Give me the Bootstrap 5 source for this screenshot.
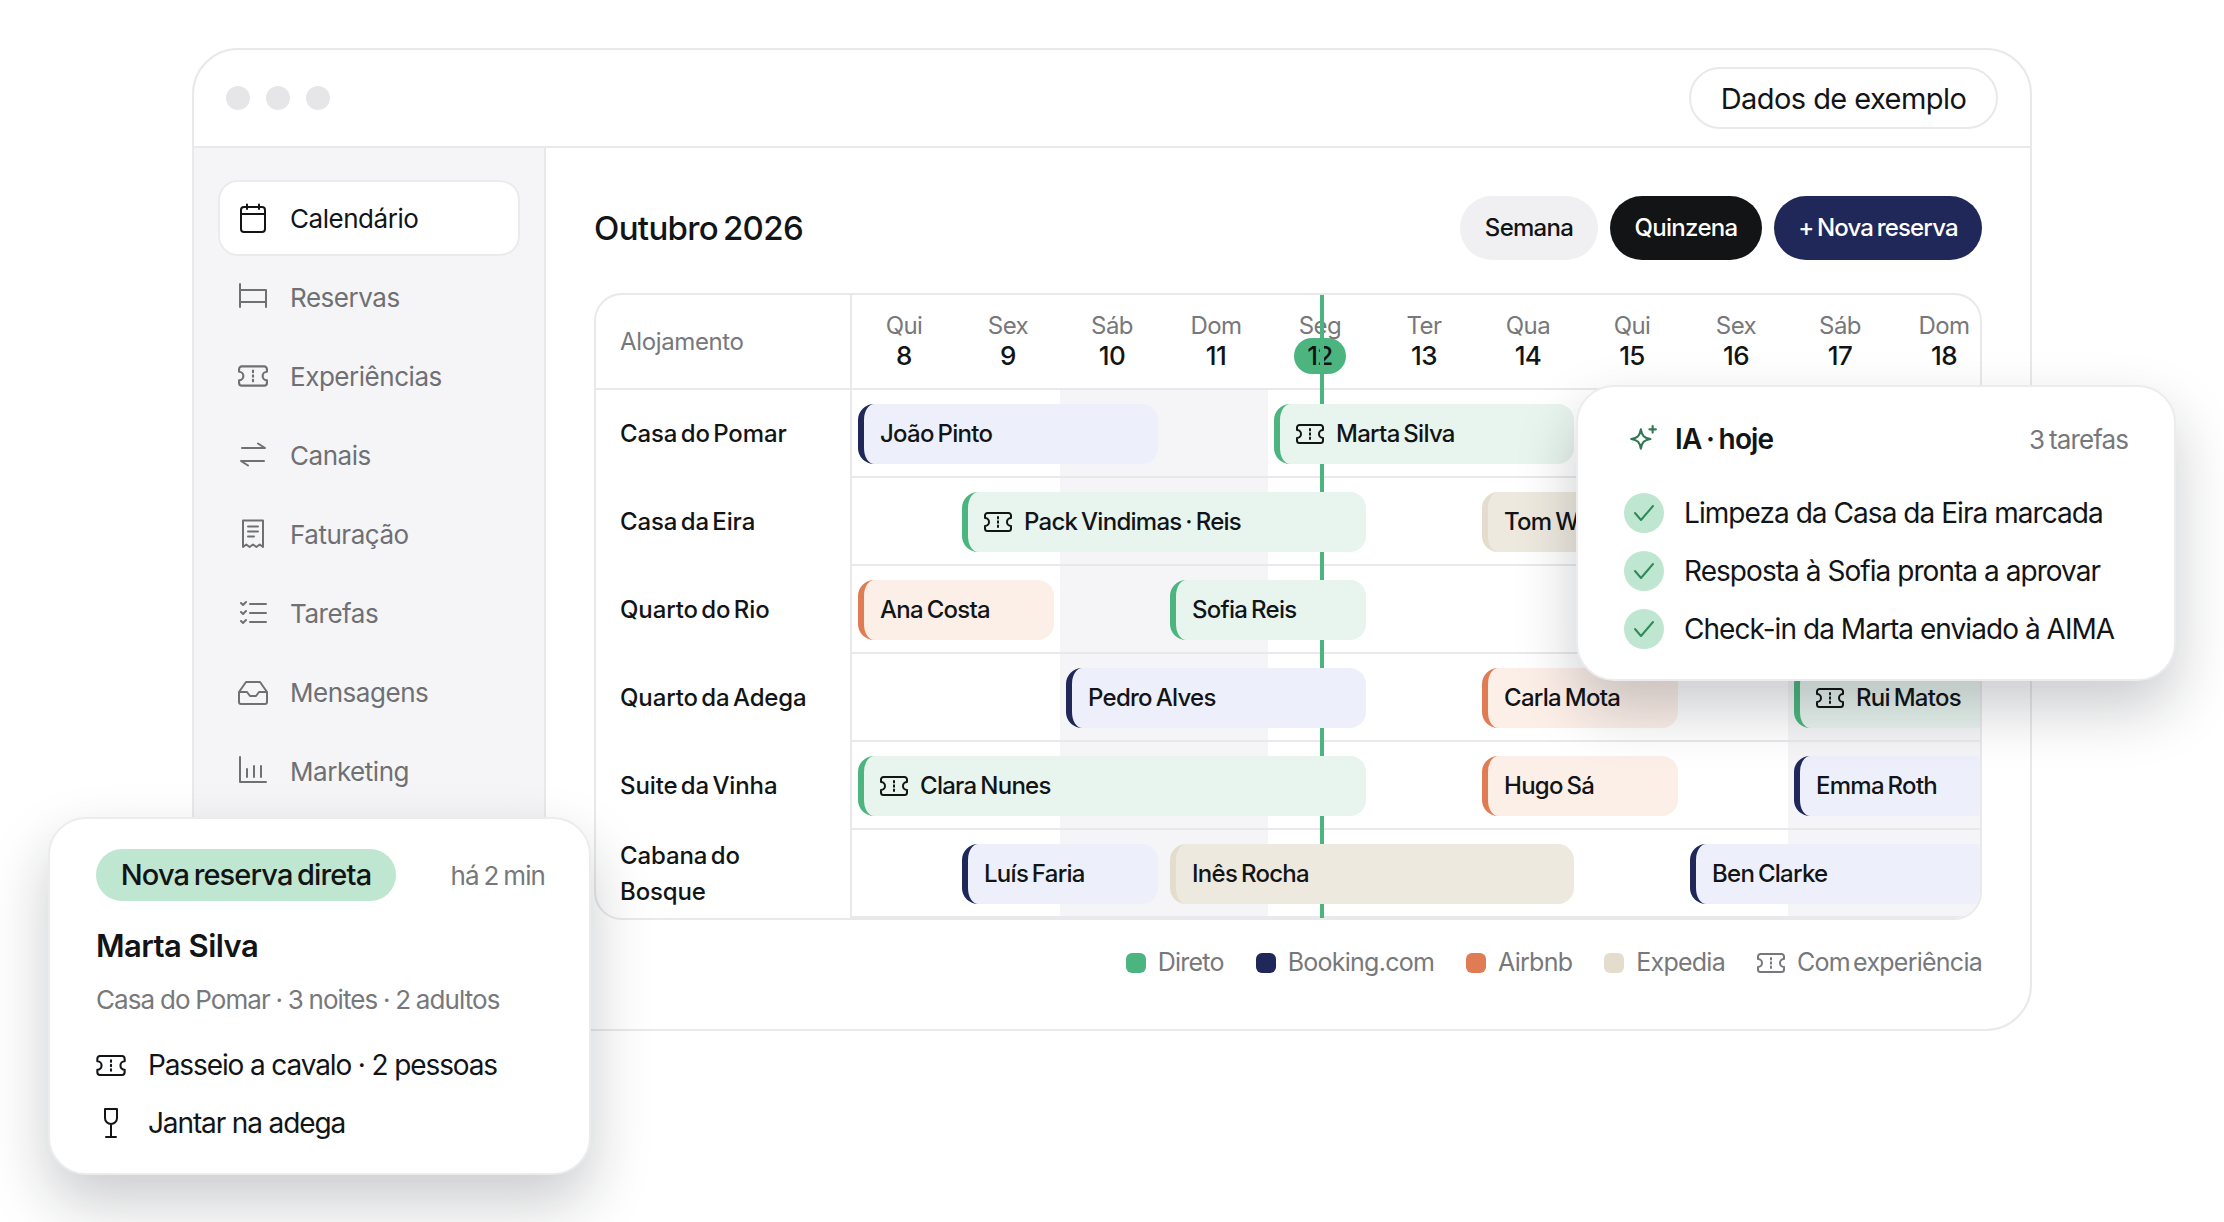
<!DOCTYPE html>
<html lang="pt-PT">
<head>
    <meta charset="UTF-8">
    <meta name="viewport" content="width=device-width, initial-scale=1.0">
    <title>Calendário de reservas</title>
    <link href="https://cdn.jsdelivr.net/npm/bootstrap@5.3.0/dist/css/bootstrap.min.css" rel="stylesheet">
    <style>
        body { background: #fff; color: #121416; font-family: "Inter", "Liberation Sans", sans-serif; letter-spacing: -.035em; }
        svg { display: block; flex-shrink: 0; fill: none; stroke: currentColor; stroke-width: 2; stroke-linecap: round; stroke-linejoin: round; }

        .stage { position: relative; width: 2224px; height: 1222px; padding: 48px 0 0 192px; overflow: hidden; }
        .app-window { width: 1840px; height: 983px; border: 2px solid #e9e9eb; border-radius: 46px; overflow: hidden; }

        .title-bar { height: 98px; padding: 0 32px 0 32px; border-bottom: 2px solid #e9e9eb; }
        .dot-grey { width: 24px; height: 24px; border-radius: 50%; background: #e6e6e8; }
        .sample-tag { height: 62px; width: 309px; padding-top: 2px; border: 2px solid #e9e9eb; border-radius: 31px; font-size: 29px; }

        .side-nav { width: 352px; flex-shrink: 0; padding: 32px 24px 0 24px; background: #f5f5f7; border-right: 2px solid #e9e9eb; }
        .side-item { height: 76px; padding-left: 18px; margin-bottom: 3px; gap: 22px; color: #6f7073; font-size: 26px; letter-spacing: -.018em; border: 2px solid transparent; border-radius: 20px; }
        .side-item.is-active { background: #fff; border-color: #ebebed; color: #121416; }

        .main-pane { padding: 48px 0 0 48px; width: 1436px; }
        .month-title { font-size: 33px; font-weight: 500; margin: 2px 0 0; letter-spacing: -.02em; word-spacing: -.1em; }
        .pill-btn { height: 64px; border-radius: 32px; font-size: 24px; font-weight: 500; letter-spacing: -.03em; }
        .pill-week { width: 138px; background: #f0f0f2; }
        .pill-fort { width: 152px; background: #121416; color: #fff; }
        .pill-new { width: 208px; background: #1f2859; color: #fff; letter-spacing: -.035em; word-spacing: -.08em; }

        .cal-box { position: relative; width: 1388px; margin-top: 33px; border: 2px solid #e9e9eb; border-radius: 28px; overflow: hidden; }
        .cal-head { height: 95px; border-bottom: 2px solid #e9e9eb; }
        .cal-name { width: 256px; flex-shrink: 0; padding: 0 0 0 24px; border-right: 2px solid #e9e9eb; font-size: 24px; font-weight: 500; line-height: 36px; letter-spacing: -.005em; word-spacing: -.12em; }
        .cal-name.is-muted { color: #77787b; font-weight: 400; letter-spacing: -.015em; }
        .day-grid, .cal-track { display: grid; grid-template-columns: repeat(11, 104px); width: 1144px; flex-shrink: 0; }
        .day-cell { text-align: center; padding-top: 16px; font-size: 24px; line-height: 29px; color: #77787b; font-weight: 400; }
        .day-cell b { display: block; margin: -2px auto 0; width: 52px; height: 36px; line-height: 36px; color: #121416; font-size: 26px; font-weight: 500; border-radius: 18px; }
        .day-cell b.is-today { background: #4cb57f; }
        .cal-track { height: 88px; padding-top: 14px; border-bottom: 2px solid #e9e9eb;
            background: linear-gradient(90deg, transparent 208px, #f5f5f7 208px, #f5f5f7 416px, transparent 416px, transparent 936px, #f5f5f7 936px); }
        .today-line { position: absolute; left: 724px; top: 0; bottom: 0; width: 4px; background: #4cb57f; z-index: 1; }
        .stay { position: relative; z-index: 2; height: 60px; margin: 0 6px; padding-left: 16px; gap: 12px; border-left: 6px solid; border-radius: 16px; font-size: 24px; font-weight: 500; letter-spacing: -.03em; word-spacing: -.08em; white-space: nowrap; overflow: hidden; }
        .stay-direct { background: #e8f4ee; border-color: #4cb57f; }
        .stay-booking { background: #edf0fb; border-color: #1f2859; }
        .stay-airbnb { background: #fcefe8; border-color: #e07c54; }
        .stay-expedia { background: #eee9de; border-color: #e4ddcd; }

        .legend-bar { margin-top: 24px; width: 1388px; gap: 32px; color: #77787b; font-size: 25px; letter-spacing: -.03em; word-spacing: -.12em; }
        .legend-bar > span { gap: 12px; }
        .legend-dot { width: 20px; height: 20px; border-radius: 6px; }

        .float-card { position: absolute; z-index: 5; background: #fff; border: 2px solid #ececee; border-radius: 38px; box-shadow: 0 28px 60px rgba(20, 24, 30, .22); }
        .new-card { left: 48px; top: 817px; width: 543px; height: 358px; padding: 30px 44px 0 46px; }
        .new-tag { height: 52px; width: 300px; border-radius: 26px; background: #bfe6d0; font-size: 29px; font-weight: 500; letter-spacing: -.03em; word-spacing: -.08em; }
        .muted-note { color: #77787b; font-size: 26px; letter-spacing: -.035em; word-spacing: -.06em; }
        .guest-name { font-size: 31px; font-weight: 600; margin: 24px 0 0; line-height: 42px; }
        .guest-sub { color: #77787b; font-size: 26px; margin-top: 15px; line-height: 36px; letter-spacing: -.035em; word-spacing: -.03em; }
        .extra-list { margin-top: 18px; }
        .extra-row { height: 58px; gap: 22px; font-size: 28px; letter-spacing: -.04em; }
        .ia-card { left: 1576px; top: 385px; width: 600px; height: 296px; padding: 31px 46px 0 46px; }
        .ia-title { gap: 17px; font-size: 28px; font-weight: 600; letter-spacing: -.03em; word-spacing: -.06em; }
        .ia-item { height: 58px; gap: 20px; font-size: 28px; letter-spacing: -.034em; white-space: nowrap; }
        .check-dot { width: 40px; height: 40px; border-radius: 50%; background: #bfe6d0; color: #2f8a5a; }
    </style>
</head>
<body>
<svg width="0" height="0" class="position-absolute">
    <symbol id="ticket" viewBox="0 0 28 20">
        <path d="M3.500 1h21A2.500 2.500 0 0 1 27 3.500V6a4 4 0 0 0 0 8v2.500a2.500 2.500 0 0 1-2.500 2.500h-21A2.500 2.500 0 0 1 1 16.500V14a4 4 0 0 0 0-8V3.500A2.500 2.500 0 0 1 3.500 1z"/>
        <path d="M14 5v1.500M14 9.300v1.400M14 13.500V15"/>
    </symbol>
</svg>

<div class="stage">
    <div class="app-window d-flex flex-column">
        <div class="title-bar d-flex align-items-center justify-content-between">
            <div class="d-flex gap-3">
                <span class="dot-grey"></span>
                <span class="dot-grey"></span>
                <span class="dot-grey"></span>
            </div>
            <div class="sample-tag d-flex align-items-center justify-content-center">Dados de exemplo</div>
        </div>

        <div class="d-flex flex-grow-1">
            <nav class="side-nav">
                <div class="side-item is-active d-flex align-items-center">
                    <svg width="30" height="30" viewBox="0 0 30 30"><rect x="3" y="4" width="24" height="25" rx="3"/><path d="M3 11h24M9 1.500V6M21 1.500V6"/></svg>
                    Calendário
                </div>
                <div class="side-item d-flex align-items-center">
                    <svg width="30" height="30" viewBox="0 0 30 30"><path d="M2 2v23M2 8h26v17M2 20h26"/></svg>
                    Reservas
                </div>
                <div class="side-item d-flex align-items-center">
                    <svg width="30" height="22"><use href="#ticket"/></svg>
                    Experiências
                </div>
                <div class="side-item d-flex align-items-center">
                    <svg width="30" height="30" viewBox="0 0 30 30"><path d="M4 8h23l-7-4.500M26 21H3l7 4.500"/></svg>
                    Canais
                </div>
                <div class="side-item d-flex align-items-center">
                    <svg width="30" height="30" viewBox="0 0 30 30"><path d="M5 1.500h20V28l-3.300-2.500-3.300 2.500-3.400-2.500-3.400 2.500-3.300-2.500L5 28zM10 7.500h10M10 12.500h10M10 17.500h6"/></svg>
                    Faturação
                </div>
                <div class="side-item d-flex align-items-center">
                    <svg width="30" height="30" viewBox="0 0 30 30"><path d="M12 6h16M12 15h16M12 24h16M3 5l2 2 3-3M3 14l2 2 3-3M3 23l2 2 3-3"/></svg>
                    Tarefas
                </div>
                <div class="side-item d-flex align-items-center">
                    <svg width="30" height="30" viewBox="0 0 30 30"><path d="M8 5h14l7 10v10a2 2 0 0 1-2 2H3a2 2 0 0 1-2-2V15zM1 15h8l3 4h6l3-4h8"/></svg>
                    Mensagens
                </div>
                <div class="side-item d-flex align-items-center">
                    <svg width="30" height="30" viewBox="0 0 30 30"><path d="M2 1v25h26M9 13v8M16 10v11M23 10v11"/></svg>
                    Marketing
                </div>
            </nav>

            <main class="main-pane">
                <div class="d-flex align-items-center justify-content-between" style="width: 1388px">
                    <h1 class="month-title">Outubro 2026</h1>
                    <div class="d-flex gap-2">
                        <div class="pill-btn pill-week d-flex align-items-center justify-content-center">Semana</div>
                        <div class="pill-btn pill-fort d-flex align-items-center justify-content-center ms-1">Quinzena</div>
                        <div class="pill-btn pill-new d-flex align-items-center justify-content-center ms-1">+ Nova reserva</div>
                    </div>
                </div>

                <div class="cal-box">
                    <div class="cal-head d-flex">
                        <div class="cal-name is-muted d-flex align-items-center">Alojamento</div>
                        <div class="day-grid">
                            <div class="day-cell">Qui<b>8</b></div>
                            <div class="day-cell">Sex<b>9</b></div>
                            <div class="day-cell">Sáb<b>10</b></div>
                            <div class="day-cell">Dom<b>11</b></div>
                            <div class="day-cell">Seg<b class="is-today">12</b></div>
                            <div class="day-cell">Ter<b>13</b></div>
                            <div class="day-cell">Qua<b>14</b></div>
                            <div class="day-cell">Qui<b>15</b></div>
                            <div class="day-cell">Sex<b>16</b></div>
                            <div class="day-cell">Sáb<b>17</b></div>
                            <div class="day-cell">Dom<b>18</b></div>
                        </div>
                    </div>

                    <div class="d-flex">
                        <div class="cal-name d-flex align-items-center">Casa do Pomar</div>
                        <div class="cal-track">
                            <div class="stay stay-booking d-flex align-items-center" style="grid-column: 1 / span 3">João Pinto</div>
                            <div class="stay stay-direct d-flex align-items-center" style="grid-column: 5 / span 3"><svg width="28" height="20"><use href="#ticket"/></svg>Marta Silva</div>
                        </div>
                    </div>
                    <div class="d-flex">
                        <div class="cal-name d-flex align-items-center">Casa da Eira</div>
                        <div class="cal-track">
                            <div class="stay stay-direct d-flex align-items-center" style="grid-column: 2 / span 4"><svg width="28" height="20"><use href="#ticket"/></svg>Pack Vindimas · Reis</div>
                            <div class="stay stay-expedia d-flex align-items-center" style="grid-column: 7 / span 3">Tom Walker</div>
                        </div>
                    </div>
                    <div class="d-flex">
                        <div class="cal-name d-flex align-items-center">Quarto do Rio</div>
                        <div class="cal-track">
                            <div class="stay stay-airbnb d-flex align-items-center" style="grid-column: 1 / span 2">Ana Costa</div>
                            <div class="stay stay-direct d-flex align-items-center" style="grid-column: 4 / span 2">Sofia Reis</div>
                        </div>
                    </div>
                    <div class="d-flex">
                        <div class="cal-name d-flex align-items-center">Quarto da Adega</div>
                        <div class="cal-track">
                            <div class="stay stay-booking d-flex align-items-center" style="grid-column: 3 / span 3">Pedro Alves</div>
                            <div class="stay stay-airbnb d-flex align-items-center" style="grid-column: 7 / span 2">Carla Mota</div>
                            <div class="stay stay-direct d-flex align-items-center" style="grid-column: 10 / span 2"><svg width="28" height="20"><use href="#ticket"/></svg>Rui Matos</div>
                        </div>
                    </div>
                    <div class="d-flex">
                        <div class="cal-name d-flex align-items-center">Suite da Vinha</div>
                        <div class="cal-track">
                            <div class="stay stay-direct d-flex align-items-center" style="grid-column: 1 / span 5"><svg width="28" height="20"><use href="#ticket"/></svg>Clara Nunes</div>
                            <div class="stay stay-airbnb d-flex align-items-center" style="grid-column: 7 / span 2">Hugo Sá</div>
                            <div class="stay stay-booking d-flex align-items-center" style="grid-column: 10 / span 2">Emma Roth</div>
                        </div>
                    </div>
                    <div class="d-flex">
                        <div class="cal-name d-flex align-items-center"><span>Cabana do<br>Bosque</span></div>
                        <div class="cal-track">
                            <div class="stay stay-booking d-flex align-items-center" style="grid-column: 2 / span 2">Luís Faria</div>
                            <div class="stay stay-expedia d-flex align-items-center" style="grid-column: 4 / span 4">Inês Rocha</div>
                            <div class="stay stay-booking d-flex align-items-center" style="grid-column: 9 / span 3">Ben Clarke</div>
                        </div>
                    </div>
                    <div class="today-line"></div>
                </div>

                <div class="legend-bar d-flex justify-content-end">
                    <span class="d-flex align-items-center"><i class="legend-dot" style="background: #4cb57f"></i>Direto</span>
                    <span class="d-flex align-items-center"><i class="legend-dot" style="background: #1f2859"></i>Booking.com</span>
                    <span class="d-flex align-items-center"><i class="legend-dot" style="background: #e07c54"></i>Airbnb</span>
                    <span class="d-flex align-items-center"><i class="legend-dot" style="background: #e4ddcd"></i>Expedia</span>
                    <span class="d-flex align-items-center"><svg width="28" height="20"><use href="#ticket"/></svg>Com experiência</span>
                </div>
            </main>
        </div>
    </div>

    <div class="float-card new-card">
        <div class="d-flex align-items-center justify-content-between">
            <div class="new-tag d-flex align-items-center justify-content-center">Nova reserva direta</div>
            <span class="muted-note">há 2 min</span>
        </div>
        <div class="guest-name">Marta Silva</div>
        <div class="guest-sub">Casa do Pomar · 3 noites · 2 adultos</div>
        <div class="extra-list">
            <div class="extra-row d-flex align-items-center">
                <svg width="30" height="21"><use href="#ticket"/></svg>
                Passeio a cavalo · 2 pessoas
            </div>
            <div class="extra-row d-flex align-items-center">
                <svg width="30" height="32" viewBox="0 0 30 32"><path d="M9 2h12v9a6 6 0 0 1-12 0zM15 17v13M10 30h10"/></svg>
                Jantar na adega
            </div>
        </div>
    </div>

    <div class="float-card ia-card">
        <div class="d-flex align-items-center justify-content-between mb-4">
            <div class="ia-title d-flex align-items-center ps-1">
                <svg width="30" height="28" viewBox="0 0 28 26" style="color: #2f7a55"><path d="M12 4c1 6 3 8 9 9-6 1-8 3-9 9-1-6-3-8-9-9 6-1 8-3 9-9zM23 1v6M20 4h6"/></svg>
                IA · hoje
            </div>
            <span class="muted-note">3 tarefas</span>
        </div>
        <div class="ia-item d-flex align-items-center">
            <span class="check-dot d-flex align-items-center justify-content-center"><svg width="22" height="18" viewBox="0 0 22 18"><path d="M2 9l6 7L20 2"/></svg></span>
            Limpeza da Casa da Eira marcada
        </div>
        <div class="ia-item d-flex align-items-center">
            <span class="check-dot d-flex align-items-center justify-content-center"><svg width="22" height="18" viewBox="0 0 22 18"><path d="M2 9l6 7L20 2"/></svg></span>
            Resposta à Sofia pronta a aprovar
        </div>
        <div class="ia-item d-flex align-items-center">
            <span class="check-dot d-flex align-items-center justify-content-center"><svg width="22" height="18" viewBox="0 0 22 18"><path d="M2 9l6 7L20 2"/></svg></span>
            Check-in da Marta enviado à AIMA
        </div>
    </div>
</div>

<script src="https://cdn.jsdelivr.net/npm/bootstrap@5.3.0/dist/js/bootstrap.bundle.min.js"></script>
</body>
</html>
